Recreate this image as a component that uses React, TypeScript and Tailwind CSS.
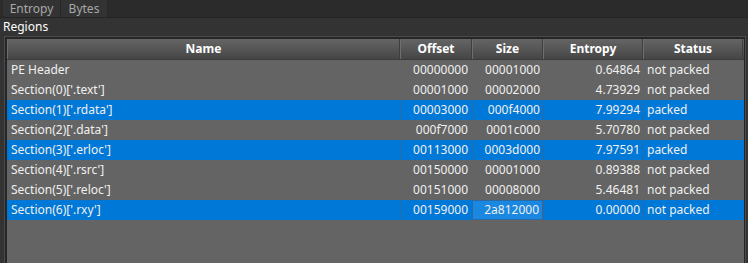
import React from "react";

const rows = [
  { name: "PE Header", off: "00000000", size: "00001000", ent: "0.64864", st: "not packed", sel: false },
  { name: "Section(0)['.text']", off: "00001000", size: "00002000", ent: "4.73929", st: "not packed", sel: false },
  { name: "Section(1)['.rdata']", off: "00003000", size: "000f4000", ent: "7.99294", st: "packed", sel: true },
  { name: "Section(2)['.data']", off: "000f7000", size: "0001c000", ent: "5.70780", st: "not packed", sel: false },
  { name: "Section(3)['.erloc']", off: "00113000", size: "0003d000", ent: "7.97591", st: "packed", sel: true },
  { name: "Section(4)['.rsrc']", off: "00150000", size: "00001000", ent: "0.89388", st: "not packed", sel: false },
  { name: "Section(5)['.reloc']", off: "00151000", size: "00008000", ent: "5.46481", st: "not packed", sel: false },
  { name: "Section(6)['.rxy']", off: "00159000", size: "2a812000", ent: "0.00000", st: "not packed", sel: true, focus: true },
];

const headers = ["Name", "Offset", "Size", "Entropy", "Status"];

export default function App() {
  return (
    <div
      className="w-[748px] h-[263px] overflow-hidden bg-[#333333] text-[#f0f0f0] text-[12px] leading-none"
      style={{ fontFamily: '"Noto Sans", "Open Sans", sans-serif' }}
    >
      <div className="h-[18px] flex bg-[#2b2b2b] border-b border-[#242424] pl-[3px]">
        <div className="w-[58px] h-[17px] flex items-center justify-center bg-[#333333] border-r border-[#262626] text-[#a8a8a8]">
          Entropy
        </div>
        <div className="w-[47px] h-[17px] flex items-center justify-center bg-[#333333] border-r border-[#262626] text-[#a8a8a8]">
          Bytes
        </div>
      </div>
      <div className="h-[18px] flex items-center pl-[3px] text-white">Regions</div>
      <div className="ml-[4px] mr-[2px] h-[240px] border-l border-t border-r border-[#4a4a4a] bg-[#262626] pl-[2px] pt-[2px] pr-[1px]">
        <div className="h-full bg-[#646464]">
          <div className="grid grid-cols-[393px_72px_71px_100px_100px] h-[21px] bg-gradient-to-b from-[#656565] via-[#565656] to-[#454545] border-b border-[#3c3c3c]">
            {headers.map((h) => (
              <div
                key={h}
                className="flex items-center justify-center font-bold text-white border-r border-[#3e3e3e] border-l border-l-[#6e6e6e]"
              >
                {h}
              </div>
            ))}
          </div>
          {rows.map((r) => (
            <div
              key={r.name}
              className={
                "grid grid-cols-[393px_72px_71px_100px_100px] h-[20px] " +
                (r.sel ? "bg-[#0078d7]" : "bg-[#646464]")
              }
            >
              <div className="flex items-center pl-[4px]">{r.name}</div>
              <div className={"flex items-center justify-end pr-[4px] border-l " + (r.sel ? "border-[#2a6aa5]" : "border-transparent")}>
                {r.off}
              </div>
              <div
                className={
                  "flex items-center justify-end pr-[3px] border-l " +
                  (r.focus ? "bg-[#1a87e0] border border-[#2a6aa5]" : r.sel ? "border-[#2a6aa5]" : "border-transparent")
                }
              >
                {r.size}
              </div>
              <div className={"flex items-center justify-end pr-[3px] border-l " + (r.sel ? "border-[#2a6aa5]" : "border-transparent")}>
                {r.ent}
              </div>
              <div className={"flex items-center pl-[3px] border-l " + (r.sel ? "border-[#2a6aa5]" : "border-transparent")}>
                {r.st}
              </div>
            </div>
          ))}
        </div>
      </div>
    </div>
  );
}
